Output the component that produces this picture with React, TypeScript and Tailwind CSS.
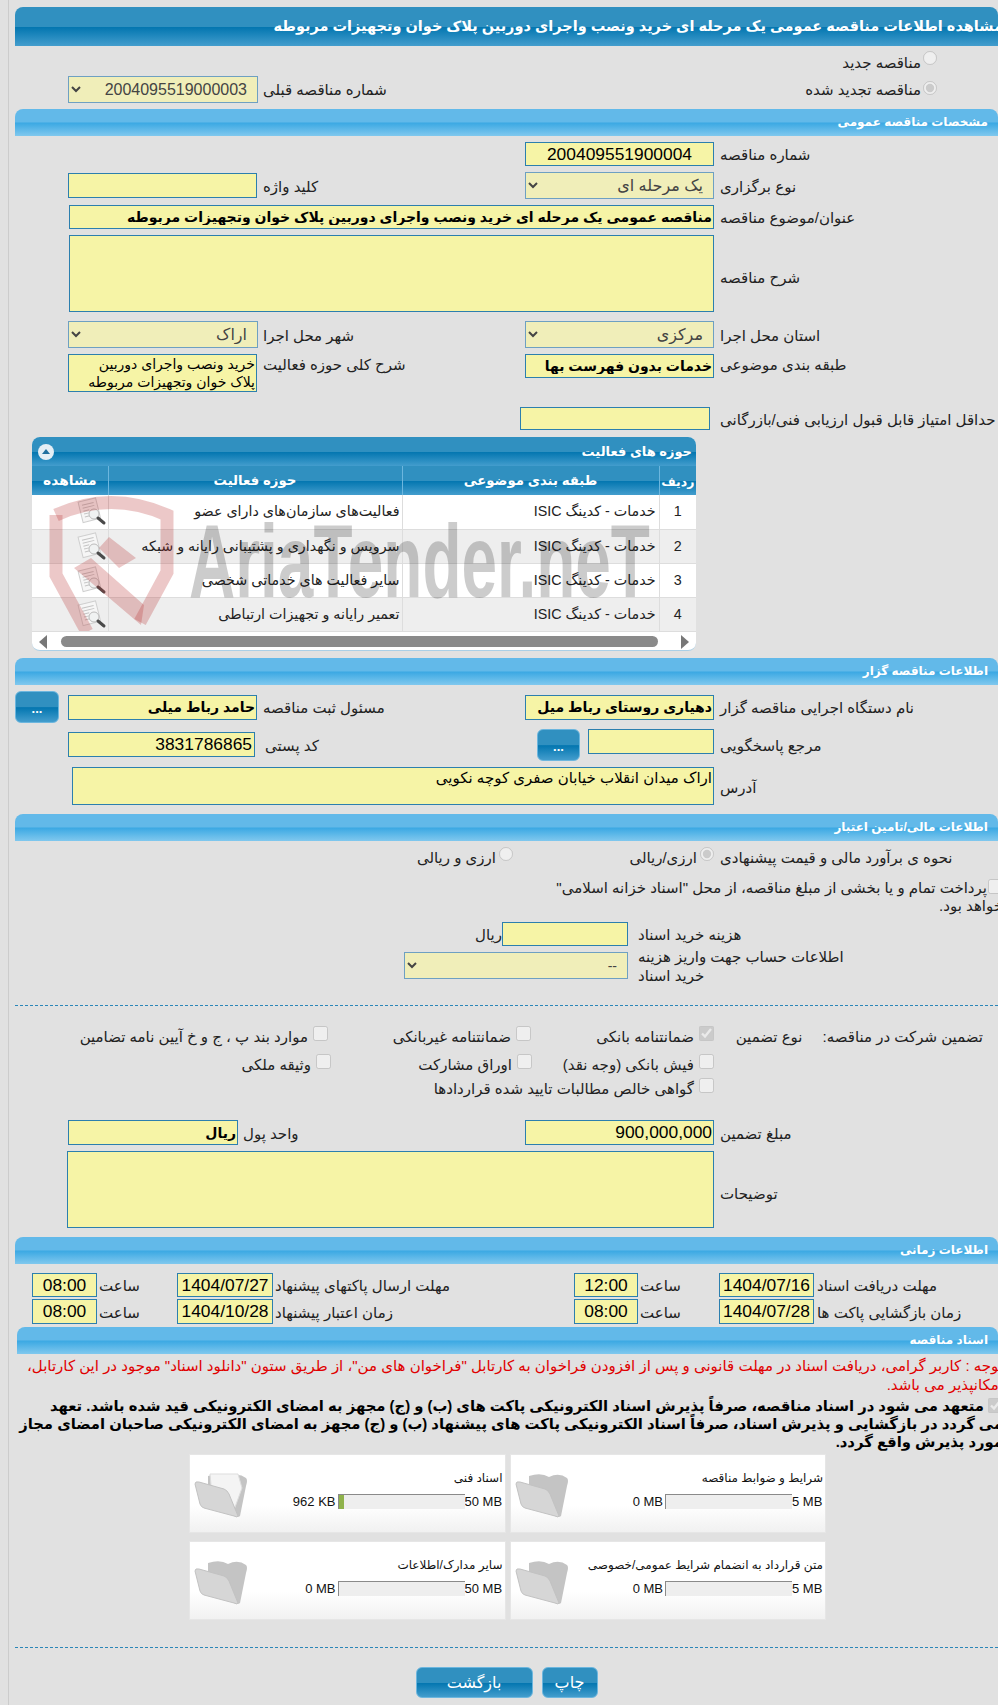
import type { ReactNode } from "react";

const bar = "bg-[linear-gradient(#3090c0_0%,#3090c0_50%,#0376b0_52%,#439dcd_100%)]";
const sectionBar = "bg-[linear-gradient(#62b9e9_0%,#62b9e9_49%,#3aa8e3_51%,#80c8ee_100%)]";
const box = "bg-[#f6f4a6] border border-[#2c7fae] text-black outline-none";

function Section({ title, className = "" }: { title: string; className?: string }) {
  return (
    <div className={`${sectionBar} h-[27px] rounded-t-lg flex items-center pr-[10px] text-white font-bold text-[12px] ${className}`}>
      {title}
    </div>
  );
}

function Label({ w = "w-[284px] pl-[6px]", className = "pt-px", children }: { w?: string; className?: string; children: ReactNode }) {
  return <div className={`${w} text-left text-[15px] text-[#222] shrink-0 ${className}`}>{children}</div>;
}

function Field({ value = "", className = "" }: { value?: string; className?: string }) {
  return <input readOnly value={value} className={`${box} shrink-0 px-px ${className}`} />;
}

function Pick({ value, className = "" }: { value: string; className?: string }) {
  return (
    <select disabled value={value} className={`bg-[#f0eeb9] border border-[#6ea0c2] text-[#444] opacity-100 shrink-0 pr-[6px] ${className}`}>
      <option value={value}>{value}</option>
    </select>
  );
}

function Dots({ className = "" }: { className?: string }) {
  return (
    <button className={`${bar} border border-[#6cb6de] rounded-md text-white text-[13px] font-bold shrink-0 pt-[2px] ${className}`}>
      ...
    </button>
  );
}

function Check({ checked = false, label, w = "" }: { checked?: boolean; label: string; w?: string }) {
  return (
    <label className={`flex items-center gap-[5px] text-[15px] text-[#222] ${w}`}>
      <input type="checkbox" disabled checked={checked} readOnly className="w-[15px] h-[15px] -mt-[6px] m-0" />
      {label}
    </label>
  );
}

function ViewIcon() {
  return (
    <svg width="31" height="29" viewBox="0 0 31 29" className="block">
      <g transform="rotate(-14 12 12)">
        <rect x="4" y="3" width="18" height="21" fill="#f6f6f6" stroke="#cfcfcf" />
        <path d="M7 7h12M7 10h12M7 13h6M7 16h5M7 19h5" stroke="#c4c4c4" strokeWidth="1" />
      </g>
      <circle cx="18" cy="17" r="5" fill="#f0f2f2" stroke="#bcbcbc" />
      <path d="M22 21l6 5" stroke="#4a4a4a" strokeWidth="3" strokeLinecap="round" />
    </svg>
  );
}

function Folder({ paper = false }: { paper?: boolean }) {
  return (
    <svg width="54" height="46" viewBox="0 0 54 46" className="block shrink-0">
      <path d="M14 4 Q26 0 34 5 Q44 0 52 6 Q54 8 52 14 L46 44 Q44 46 40 44 L14 28 Z" fill="#c4c4c4" />
      {paper && <path d="M16 2 L44 2 L48 16 L40 38 L18 24 Z" fill="#f4f4f4" stroke="#ddd" />}
      <path d="M1 12 Q1 9 5 10 L30 17 Q33 18 35 22 L44 44 Q44 46 40 44 L10 36 Q7 35 6 32 Z" fill="#d6d6d6" stroke="#c2c2c2" />
    </svg>
  );
}

function DocCard({ title, max, used, wide = false, fill = false, paper = false }: { title: string; max: string; used: string; wide?: boolean; fill?: boolean; paper?: boolean }) {
  return (
    <div className="h-[79px] bg-[linear-gradient(#ffffff_0%,#ffffff_65%,#f1f1f1_100%)] border border-[#e6e6e6] flex pr-[2px] pl-[4px]">
      <div className="flex-1 min-w-0 text-[12px] text-[#111]">
        <div className="mt-[14px] h-[18px] leading-[18px] whitespace-nowrap">{title}</div>
        <div className="mt-[6px] flex items-center h-[16px] font-['Liberation_Sans',sans-serif] whitespace-nowrap">
          <span className={`${wide ? "w-[38px]" : "w-[31px]"} shrink-0 text-[13px]`} dir="ltr">{max}</span>
          <div dir="ltr" className="w-[127px] h-[15px] bg-[#eeeeee] border-t border-l border-[#8a8a8a] shrink-0">
            {fill && <div className="w-[5px] h-full bg-[#8fb24b]" />}
          </div>
          <span className="pr-[2px] text-[13px]" dir="ltr">{used}</span>
        </div>
      </div>
      <div className="mt-[17px]">
        <Folder paper={paper} />
      </div>
    </div>
  );
}

function Watermark() {
  return (
    <div className="absolute left-0 top-[58px] h-[136px] w-full overflow-hidden pointer-events-none" dir="ltr">
      <svg width="130" height="136" viewBox="50 495 130 136" className="absolute left-[17px] top-0">
        <g fill="none" stroke="#b83232" strokeOpacity="0.27" strokeWidth="13">
          <path d="M57 515 Q112 490 168 515 V572 L141 622" />
          <path d="M57 515 V575 L88 632" />
        </g>
        <path d="M110 537 L137 558 L120 568 L100 548 Z M75 568 L92 558 L145 605 L142 625 Z" fill="#b83232" fillOpacity="0.27" />
      </svg>
      <span className="absolute left-[157px] -top-[9px] origin-left scale-x-[0.615] font-['Liberation_Sans',sans-serif] font-bold text-[104px] leading-[150px] text-black/20 whitespace-nowrap">
        AriaTender.neT
      </span>
    </div>
  );
}

const activityRows = [
  ["1", "خدمات - کدینگ ISIC", "فعالیت‌های سازمان‌های دارای عضو"],
  ["2", "خدمات - کدینگ ISIC", "سرویس و نگهداری و پشتیبانی رایانه و شبکه"],
  ["3", "خدمات - کدینگ ISIC", "سایر فعالیت های خدماتی شخصی"],
  ["4", "خدمات - کدینگ ISIC", "تعمیر رایانه و تجهیزات ارتباطی"],
];

function ActivityTable() {
  return (
    <div className="relative mt-[7px] mr-[302px] w-[664px] h-[214px] rounded-lg border-b border-[#a9cfe6] bg-white overflow-hidden">
      <div className={`${bar} h-[29px] flex items-center justify-between pl-[6px] pr-[4px] text-white font-bold text-[13px]`}>
        <span>حوزه های فعالیت</span>
        <span className="w-[16px] h-[16px] rounded-full bg-[#e4eef5] flex items-center justify-center">
          <span className="border-x-[4px] border-x-transparent border-b-[5px] border-b-[#1f6f9f]" />
        </span>
      </div>
      <table className="w-full table-fixed border-collapse text-[14.3px] text-[#222]">
        <colgroup>
          <col className="w-[37px]" />
          <col className="w-[257px]" />
          <col className="w-[294px]" />
          <col className="w-[76px]" />
        </colgroup>
        <thead>
          <tr className={`${bar} h-[29px] text-white text-[13.3px]`}>
            <th className="border-l border-[#6cb6de] font-bold text-[12.5px] whitespace-nowrap pt-[4px]">ردیف</th>
            <th className="border-l border-[#6cb6de] font-bold">طبقه بندی موضوعی</th>
            <th className="border-l border-[#6cb6de] font-bold">حوزه فعالیت</th>
            <th className="font-bold text-[13.8px]">مشاهده</th>
          </tr>
        </thead>
        <tbody>
          {activityRows.map((row, i) => (
            <tr key={row[0]} className={`h-[34px] border-b border-[#dddddd] ${i % 2 ? "bg-[#eeeeee]" : "bg-white"}`}>
              <td className="border-l border-[#dddddd] text-center">{row[0]}</td>
              <td className="border-l border-[#dddddd] pr-[3px] whitespace-nowrap">{row[1]}</td>
              <td className="border-l border-[#dddddd] pr-[2px] whitespace-nowrap">{row[2]}</td>
              <td className="pr-px">
                <ViewIcon />
              </td>
            </tr>
          ))}
        </tbody>
      </table>
      <Watermark />
      <div dir="ltr" className="flex items-center h-[20px] px-[7px] gap-[14px]">
        <span className="border-y-[7px] border-y-transparent border-r-[8px] border-r-[#777]" />
        <div className="w-[611px] h-[11px] rounded-full bg-[#8a8a8a]" />
        <span className="ml-[9px] border-y-[7px] border-y-transparent border-l-[8px] border-l-[#777]" />
      </div>
    </div>
  );
}

export default function App() {
  return (
    <div className="w-[998px] h-[1705px] overflow-hidden bg-[#e1e1e1] pl-2 font-['Liberation_Sans','DejaVu_Sans',sans-serif]">
      <div className="h-full border-l border-[#cccccc] pl-[6px]">
        <div dir="rtl" className="pt-[7px] leading-[19px]">
          {/* header */}
          <div className={`${bar} h-[39px] rounded-t-lg flex items-center text-white font-bold text-[14.5px] whitespace-nowrap overflow-hidden`}>
            <span className="-mr-[5px]">مشاهده اطلاعات مناقصه عمومی یک مرحله ای خرید ونصب واجرای دوربین پلاک خوان وتجهیزات مربوطه</span>
          </div>
          <div className="h-[32px] -mb-[2px] pr-[61px] flex items-center gap-[2px] text-[15px] text-[#222]">
            <input type="radio" disabled readOnly className="w-[14px] h-[14px] m-0 -mt-[8px]" />
            مناقصه جدید
          </div>
          <div className="h-[27px] flex items-center justify-between text-[15px] text-[#222]">
            <div className="pr-[61px] flex items-center gap-[2px]">
              <input type="radio" disabled checked readOnly className="w-[14px] h-[14px] m-0 -mt-[4px]" />
              مناقصه تجدید شده
            </div>
            <div className="flex items-center gap-[5px] ml-[53px]">
              شماره مناقصه قبلی
              <Pick value="2004095519000003" className="w-[190px] h-[27px] text-[16px]" />
            </div>
          </div>

          <Section title="مشخصات مناقصه عمومی" className="mt-[6px]" />
          <div className="flex mt-[6px] items-center">
            <Label>شماره مناقصه</Label>
            <Field value="200409551900004" className="w-[189px] h-[24px] text-[17.4px] text-center" />
          </div>
          <div className="flex mt-[6px] items-center">
            <Label>نوع برگزاری</Label>
            <Pick value="یک مرحله ای" className="w-[189px] h-[27px] text-[16px]" />
            <Label w="w-[262px]">کلید واژه</Label>
            <Field className="w-[189px] h-[25px] mr-[6px]" />
          </div>
          <div className="flex mt-[6px] items-center">
            <Label>عنوان/موضوع مناقصه</Label>
            <Field value="مناقصه عمومی یک مرحله ای خرید ونصب واجرای دوربین پلاک خوان وتجهیزات مربوطه" className="w-[645px] h-[24px] text-[14px] font-bold" />
          </div>
          <div className="flex mt-[6px] items-center">
            <Label className="pt-[7px]">شرح مناقصه</Label>
            <textarea readOnly className={`${box} w-[645px] h-[77px] resize-none block`} />
          </div>
          <div className="flex mt-[9px] items-center">
            <Label>استان محل اجرا</Label>
            <Pick value="مرکزی" className="w-[189px] h-[27px] text-[16px]" />
            <Label w="w-[262px]">شهر محل اجرا</Label>
            <Pick value="اراک" className="w-[190px] h-[27px] mr-[5px] text-[16px]" />
          </div>
          <div className="flex mt-[6px] items-start">
            <Label>طبقه بندی موضوعی</Label>
            <Field value="خدمات بدون فهرست بها" className="w-[189px] h-[24px] text-[14px] font-bold" />
            <Label w="w-[262px]">شرح کلی حوزه فعالیت</Label>
            <div className={`${box} w-[189px] h-[38px] mr-[6px] text-[14px] leading-[18px] pr-px overflow-hidden whitespace-nowrap`}>
              خرید ونصب واجرای دوربین
              <br />
              پلاک خوان وتجهیزات مربوطه
            </div>
          </div>
          <div className="flex mt-[15px] items-center">
            <Label>حداقل امتیاز قابل قبول ارزیابی فنی/بازرگانی</Label>
            <Field className="w-[190px] h-[23px] mr-[4px]" />
          </div>

          <ActivityTable />

          <Section title="اطلاعات مناقصه گزار" className="mt-[7px]" />
          <div className="flex mt-[6px] items-center">
            <Label>نام دستگاه اجرایی مناقصه گزار</Label>
            <Field value="دهیاری روستای رباط میل" className="w-[189px] h-[25px] text-[14px] font-bold" />
            <Label w="w-[262px]">مسئول ثبت مناقصه</Label>
            <Field value="حامد رباط میلی" className="w-[189px] h-[25px] mr-[6px] text-[14px] font-bold" />
            <Dots className="w-[44px] h-[32px] mr-[9px]" />
          </div>
          <div className="flex mt-[6px] items-start">
            <Label className="mt-[7px]">مرجع پاسخگویی</Label>
            <Field className="w-[126px] h-[25px]" />
            <Dots className="w-[43px] h-[32px] mr-[8px]" />
            <Label w="w-[276px] pl-[4px]" className="mt-[7px]">کد پستی</Label>
            <Field value="3831786865" className="w-[187px] h-[25px] mt-[3px] mr-[6px] text-[17.4px] pr-[2px]" />
          </div>
          <div className="flex mt-[6px] items-center">
            <Label className="pt-[3px]">آدرس</Label>
            <div className={`${box} w-[642px] h-[38px] text-[15px] pr-px`}>اراک میدان انقلاب خیابان صفری کوچه نکویی</div>
          </div>

          <Section title="اطلاعات مالی/تامین اعتبار" className="mt-[9px]" />
          <div className="flex mt-[6px] h-[20px] items-center text-[15px] text-[#222]">
            <Label>نحوه ی برآورد مالی و قیمت پیشنهادی</Label>
            <div className="flex items-center gap-[3px] w-[201px]">
              <input type="radio" disabled checked readOnly className="w-[14px] h-[14px] m-0 -mt-[6px]" />
              ارزی/ریالی
            </div>
            <div className="flex items-center gap-[3px]">
              <input type="radio" disabled readOnly className="w-[14px] h-[14px] m-0 -mt-[6px]" />
              ارزی و ریالی
            </div>
          </div>
          <div className="-mr-[5px] mt-[12px] text-[15px] leading-[18px] text-[#222] whitespace-nowrap">
            <input type="checkbox" disabled readOnly className="inline-block align-text-top w-[15px] h-[15px] m-0 ml-px" />
            پرداخت تمام و یا بخشی از مبلغ مناقصه، از محل "اسناد خزانه اسلامی"
            <br />
            خواهد بود.
          </div>
          <div className="flex mt-[7px] items-center text-[15px] text-[#222]">
            <Label w="w-[360px]">هزینه خرید اسناد</Label>
            <Field className="w-[126px] h-[24px] mr-[10px]" />
            ریال
          </div>
          <div className="flex mt-[6px] h-[27px] items-center">
            <Label w="w-[360px]">
              اطلاعات حساب جهت واریز هزینه
              <br />
              خرید اسناد
            </Label>
            <Pick value="--" className="w-[224px] h-[27px] mr-[10px] text-[14px]" />
          </div>

          <div className="mt-[26px] border-t border-dashed border-[#2a86b8]" />

          <div className="flex mt-[18px] h-[24px] items-center">
            <div className="w-[284px] shrink-0 pr-[15px] flex gap-[20px] text-[15px] text-[#222]">
              <span>تضمین شرکت در مناقصه:</span>
              <span>نوع تضمین</span>
            </div>
            <Check checked label="ضمانتنامه بانکی" w="w-[183px]" />
            <Check label="ضمانتنامه غیربانکی" w="w-[203px]" />
            <Check label="موارد بند پ ، ج و خ آیین نامه تضامین" />
          </div>
          <div className="flex mt-[4px] h-[24px] items-center pr-[284px]">
            <Check label="فیش بانکی (وجه نقد)" w="w-[182px]" />
            <Check label="اوراق مشارکت" w="w-[201px]" />
            <Check label="وثیقه ملکی" />
          </div>
          <div className="flex h-[24px] items-center pr-[284px]">
            <Check label="گواهی خالص مطالبات تایید شده قراردادها" />
          </div>

          <div className="flex mt-[20px] items-center">
            <Label>مبلغ تضمین</Label>
            <Field value="900,000,000" className="w-[189px] h-[25px] text-[17.4px]" />
            <Label w="w-[282px]">واحد پول</Label>
            <Field value="ریال" className="w-[170px] h-[25px] mr-[5px] text-[14px] font-bold" />
          </div>
          <div className="flex mt-[6px] items-center">
            <Label className="pt-[7px]">توضیحات</Label>
            <textarea readOnly className={`${box} w-[647px] h-[77px] resize-none block`} />
          </div>

          <Section title="اطلاعات زمانی" className="mt-[9px]" />
          <div className="flex mt-[9px] h-[24px] items-center">
            <Label w="w-[181px]">مهلت دریافت اسناد</Label>
            <Field value="1404/07/16" className="w-[95px] h-[24px] mr-[3px] text-[17.4px] text-center" />
            <Label w="w-[79px]">ساعت</Label>
            <Field value="12:00" className="w-[64px] h-[24px] mr-[2px] text-[17.4px] text-center" />
            <Label w="w-[299px]">مهلت ارسال پاکتهای پیشنهاد</Label>
            <Field value="1404/07/27" className="w-[96px] h-[24px] mr-[2px] text-[17.4px] text-center" />
            <Label w="w-[78px]">ساعت</Label>
            <Field value="08:00" className="w-[65px] h-[24px] mr-[2px] text-[17.4px] text-center" />
          </div>
          <div className="flex mt-[2px] h-[25px] items-center">
            <Label w="w-[181px]">زمان بازگشایی پاکت ها</Label>
            <Field value="1404/07/28" className="w-[95px] h-[25px] mr-[3px] text-[17.4px] text-center" />
            <Label w="w-[79px]">ساعت</Label>
            <Field value="08:00" className="w-[64px] h-[25px] mr-[2px] text-[17.4px] text-center" />
            <Label w="w-[299px]">زمان اعتبار پیشنهاد</Label>
            <Field value="1404/10/28" className="w-[96px] h-[25px] mr-[2px] text-[17.4px] text-center" />
            <Label w="w-[78px]">ساعت</Label>
            <Field value="08:00" className="w-[65px] h-[25px] mr-[2px] text-[17.4px] text-center" />
          </div>

          <Section title="اسناد مناقصه" className="mt-[3px] ml-[2px]" />
          <div className="mt-[2px] -mr-[5px] text-[15px] leading-[19px] text-[#e00000] whitespace-nowrap">
            توجه : کاربر گرامی، دریافت اسناد در مهلت قانونی و پس از افزودن فراخوان به کارتابل "فراخوان های من"، از طریق ستون "دانلود اسناد" موجود در این کارتابل،
            <br />
            امکانپذیر می باشد.
          </div>
          <div className="mt-[3px] -mr-[5px] text-[14.8px] leading-[18px] font-bold text-black whitespace-nowrap">
            <input type="checkbox" disabled checked readOnly className="inline-block align-text-top w-[15px] h-[15px] m-0 ml-[4px]" />
            متعهد می شود در اسناد مناقصه، صرفاً پذیرش اسناد الکترونیکی پاکت های (ب) و (ج) مجهز به امضای الکترونیکی قید شده باشد. تعهد
            <br />
            می گردد در بازگشایی و پذیرش اسناد، صرفاً اسناد الکترونیکی پاکت های پیشنهاد (ب) و (ج) مجهز به امضای الکترونیکی صاحبان امضای مجاز
            <br />
            مورد پذیرش واقع گردد.
          </div>

          <div className="mt-[3px] mr-[172px] w-[637px] grid grid-cols-2 gap-x-[4px] gap-y-[8px]">
            <DocCard title="شرایط و ضوابط مناقصه" max="5 MB" used="0 MB" />
            <DocCard title="اسناد فنی" max="50 MB" used="962 KB" wide fill paper />
            <DocCard title="متن قرارداد به انضمام شرایط عمومی/خصوصی" max="5 MB" used="0 MB" />
            <DocCard title="سایر مدارک/اطلاعات" max="50 MB" used="0 MB" wide />
          </div>

          <div className="mt-[27px] border-t border-dashed border-[#2a86b8]" />

          <div className="mt-[19px] flex justify-center gap-[9px]">
            <button className={`${bar} w-[56px] h-[31px] rounded-md border border-[#6cb6de] text-white text-[16px]`}>چاپ</button>
            <button className={`${bar} w-[117px] h-[31px] rounded-md border border-[#6cb6de] text-white text-[16px]`}>بازگشت</button>
          </div>
        </div>
      </div>
    </div>
  );
}
